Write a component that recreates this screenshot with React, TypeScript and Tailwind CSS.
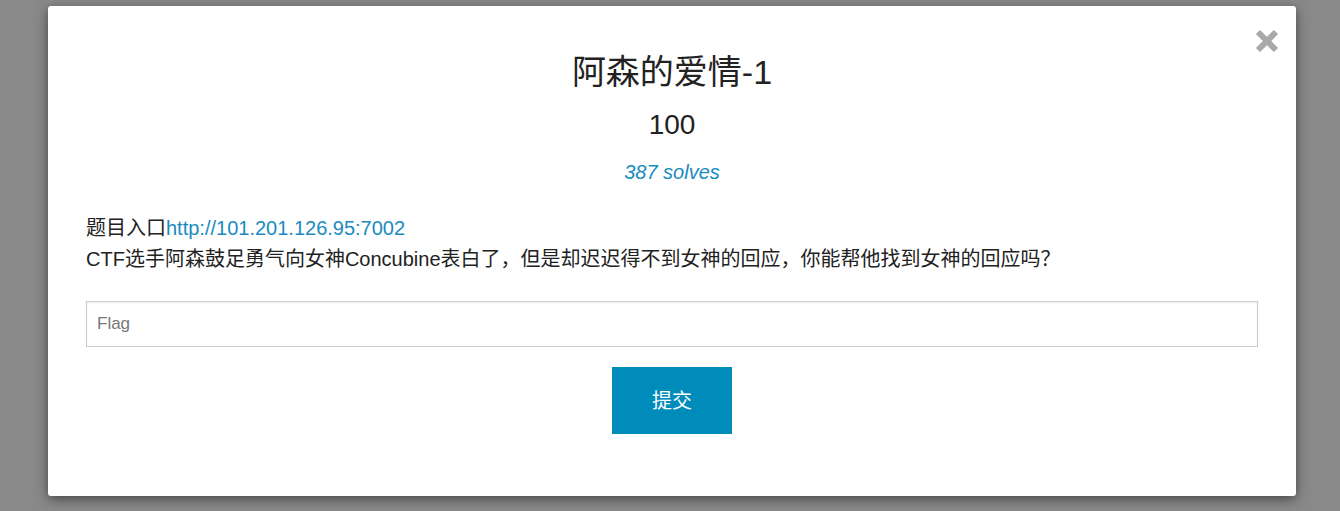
import React from "react";

export default function App() {
  const font = { fontFamily: '"Liberation Sans", Arial, "Noto Sans CJK SC", sans-serif' };
  return (
    <div className="w-[1340px] h-[511px] bg-[#898989] pt-[6px] pl-[48px]" style={font}>
      <div className="relative w-[1248px] h-[490px] bg-white rounded-[3px] shadow-[0_3px_12px_rgba(0,0,0,0.5)] flex flex-col px-[38px]">
        <button className="absolute right-[16px] top-[22px] text-[#a9a9a9]">
          <svg width="26" height="26" viewBox="0 0 26 26">
            <path d="M4 4 L22 22 M22 4 L4 22" stroke="#a9a9a9" strokeWidth="6" strokeLinecap="butt" />
          </svg>
        </button>
        <h1 className="text-center text-[34px] leading-[40px] text-[#222] mt-[46px]">阿森的爱情-1</h1>
        <div className="text-center text-[28px] leading-[34px] text-[#222] mt-[16px]">100</div>
        <div className="text-center text-[20px] leading-[24px] italic text-[#1a8bc0] mt-[18px]">387 solves</div>
        <div className="mt-[29px] text-[20px] leading-[31px] text-[#222]">
          <div>题目入口<a className="text-[#1a8bc0]">http://101.201.126.95:7002</a></div>
          <div>CTF选手阿森鼓足勇气向女神Concubine表白了，但是却迟迟得不到女神的回应，你能帮他找到女神的回应吗？</div>
        </div>
        <input
          placeholder="Flag"
          className="mt-[26px] h-[46px] w-full border border-[#ccc] px-[10px] text-[17px] text-[#222] placeholder:text-[#777] shadow-[inset_0_1px_2px_rgba(0,0,0,0.08)] outline-none"
          style={font}
        />
        <div className="flex justify-center mt-[20px]">
          <button className="w-[120px] h-[67px] bg-[#008cba] text-white text-[20px]" style={font}>提交</button>
        </div>
      </div>
    </div>
  );
}
